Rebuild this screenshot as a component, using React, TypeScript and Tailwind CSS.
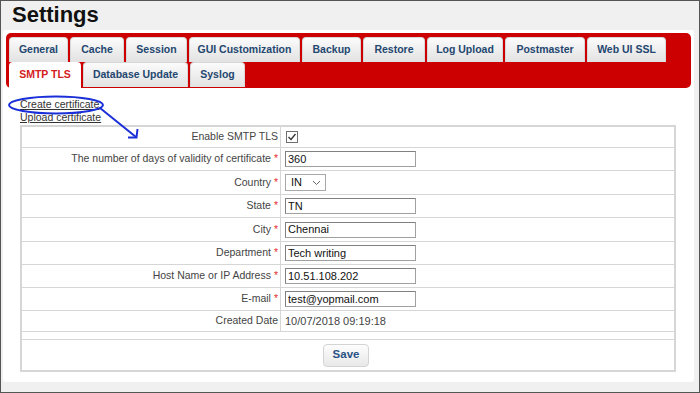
import React from "react";

const row1 = [
  { label: "General", w: "w-[59px]" },
  { label: "Cache", w: "w-[54px]" },
  { label: "Session", w: "w-[61px]" },
  { label: "GUI Customization", w: "w-[111px]" },
  { label: "Backup", w: "w-[59px]" },
  { label: "Restore", w: "w-[62px]" },
  { label: "Log Upload", w: "w-[76px]" },
  { label: "Postmaster", w: "w-[80px]" },
  { label: "Web UI SSL", w: "w-[79px]" },
];

const row2 = [
  { label: "SMTP TLS", w: "w-[72px]", active: true },
  { label: "Database Update", w: "w-[105px]" },
  { label: "Syslog", w: "w-[55px]" },
];

const Tab = ({ label, w, active }: { label: string; w: string; active?: boolean }) => (
  <div
    className={
      "h-[25px] flex items-center justify-center rounded-t-[4px] text-[10.5px] font-bold " +
      w +
      (active
        ? " bg-white text-[#d42020] h-[26px]"
        : " bg-gradient-to-b from-[#fbfbfb] to-[#e2e2e2] text-[#24476f] border border-[#d8d8d8] border-b-0")
    }
  >
    {label}
  </div>
);

const Req = () => <span className="text-[#e03030] ml-[3px]">*</span>;

const TextInput = ({ value }: { value: string }) => (
  <div className="w-[131px] h-[16px] border border-[#a0a0a0] border-t-[#808080] border-l-[#808080] flex items-center px-[2px] text-[11px] text-[#111] leading-none">
    {value}
  </div>
);

const Row = ({
  label,
  req,
  h,
  children,
}: {
  label: string;
  req?: boolean;
  h: string;
  children: React.ReactNode;
}) => (
  <div className={"flex border-b border-[#d6d6d6] " + h}>
    <div className="w-[259px] shrink-0 border-r border-[#d6d6d6] flex items-center justify-end pr-[2px] text-[10.5px] text-[#444]">
      {label}
      {req && <Req />}
    </div>
    <div className="flex items-center pl-[4px] text-[11px] text-[#444]">{children}</div>
  </div>
);

export default function App() {
  return (
    <div className="relative w-[700px] h-[393px] bg-[#f0f0f0] border border-[#555] overflow-hidden font-['Liberation_Sans',Arial,sans-serif]">
      <h1 className="h-[29px] pl-[11px] pt-[1px] text-[22px] leading-[26px] font-bold text-[#111]">Settings</h1>
      <div className="ml-[2px] mr-[5px] h-[352px] bg-white rounded-[3px] pt-[3px] px-[3px]">
        <div className="h-[55px] bg-[#cc0000] rounded-[5px] pt-[4px] pl-[3px]">
          <div className="flex gap-[2px]">
            {row1.map((t) => (
              <Tab key={t.label} {...t} />
            ))}
          </div>
          <div className="flex gap-[2px]">
            {row2.map((t) => (
              <Tab key={t.label} {...t} />
            ))}
          </div>
        </div>

        <div className="ml-[14px] mt-[10px] text-[10.5px] leading-[13px] text-[#333]">
          <div className="underline">Create certificate</div>
          <div className="underline">Upload certificate</div>
        </div>

        <div className="ml-[14px] mt-[1px] w-[656px] border-2 border-[#d6d6d6]">
          <Row label="Enable SMTP TLS" h="h-[21px]">
            <svg width="12" height="12" viewBox="0 0 12 12" className="ml-[1px]">
              <rect x="0.5" y="0.5" width="11" height="11" fill="#fff" stroke="#707070" />
              <path d="M2.5 6 L5 8.5 L9.5 3" fill="none" stroke="#333" strokeWidth="1.3" />
            </svg>
          </Row>
          <Row label="The number of days of validity of certificate" req h="h-[23px]">
            <TextInput value="360" />
          </Row>
          <Row label="Country" req h="h-[24px]">
            <div className="w-[41px] h-[17px] border border-[#a8a8a8] flex items-center justify-between pl-[5px] pr-[4px] text-[11px] text-[#111]">
              <span>IN</span>
              <svg width="9" height="6" viewBox="0 0 9 6">
                <path d="M1 1 L4.5 4.5 L8 1" fill="none" stroke="#666" strokeWidth="1" />
              </svg>
            </div>
          </Row>
          <Row label="State" req h="h-[23px]">
            <TextInput value="TN" />
          </Row>
          <Row label="City" req h="h-[24px]">
            <TextInput value="Chennai" />
          </Row>
          <Row label="Department" req h="h-[23px]">
            <TextInput value="Tech writing" />
          </Row>
          <Row label="Host Name or IP Address" req h="h-[23px]">
            <TextInput value="10.51.108.202" />
          </Row>
          <Row label="E-mail" req h="h-[23px]">
            <TextInput value="test@yopmail.com" />
          </Row>
          <Row label="Created Date" h="h-[21px]">
            10/07/2018 09:19:18
          </Row>
          <div className="h-[8px] border-b border-[#d6d6d6]" />
          <div className="h-[30px] flex items-center justify-center">
            <button className="w-[46px] h-[23px] rounded-[4px] border border-[#d4d4d4] bg-gradient-to-b from-[#fdfdfd] to-[#e8e8e8] text-[11.5px] font-bold text-[#2a5285] -ml-[4px]">
              Save
            </button>
          </div>
        </div>
      </div>

      <svg className="absolute left-0 top-0 pointer-events-none" width="700" height="393">
        <ellipse cx="55" cy="104" rx="47" ry="8.5" fill="none" stroke="#1b2fd8" strokeWidth="2" />
        <path d="M99 107 L135 136" fill="none" stroke="#1b2fd8" strokeWidth="2" />
        <path d="M127 136.5 L135.5 136.5 L136.5 128" fill="none" stroke="#1b2fd8" strokeWidth="2" strokeLinejoin="miter" />
      </svg>
    </div>
  );
}
